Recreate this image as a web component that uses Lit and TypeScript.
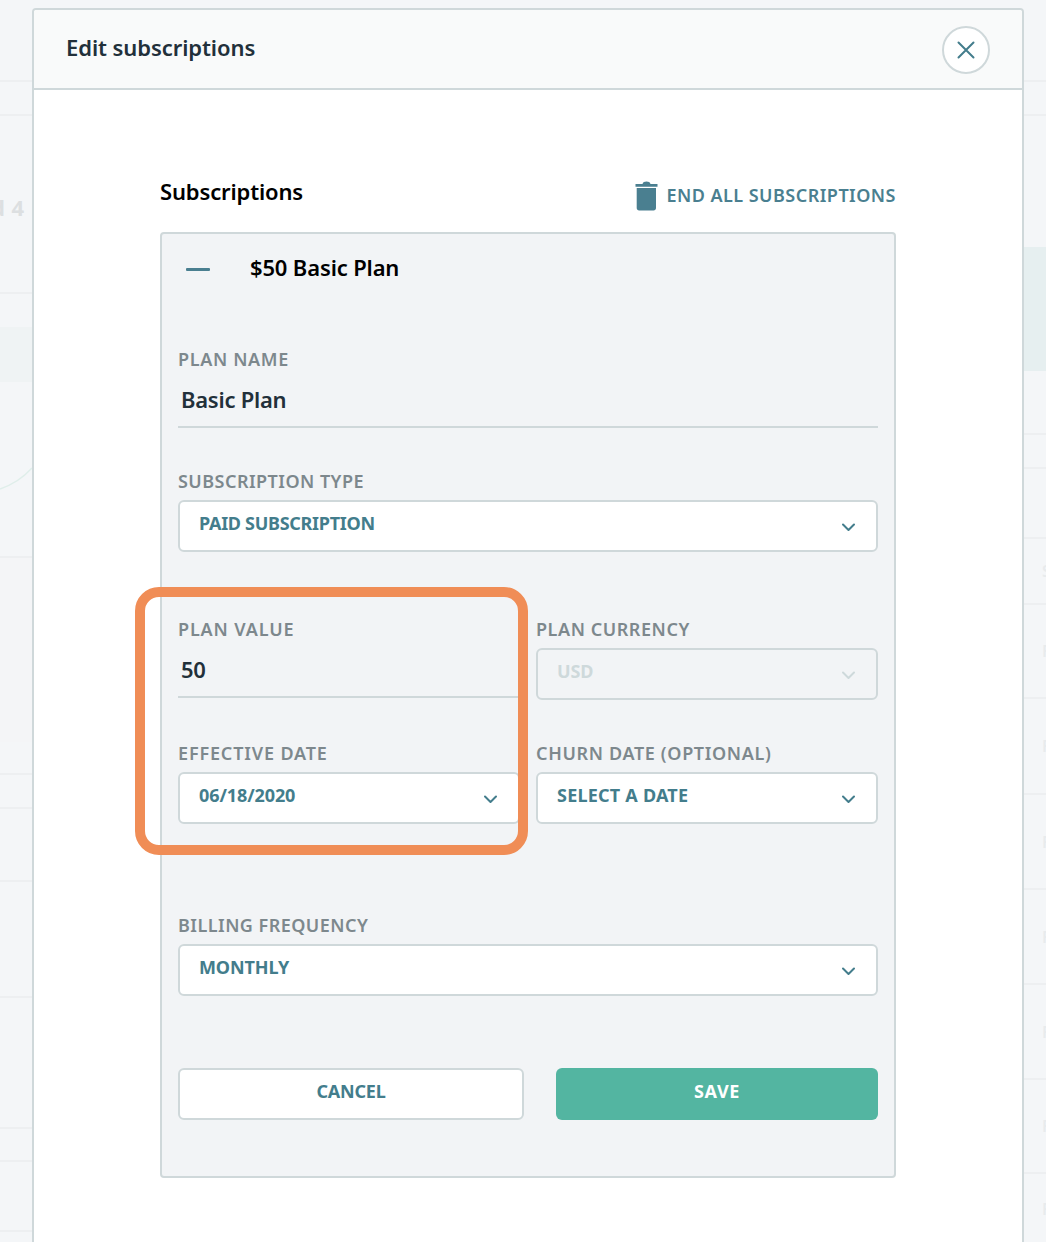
import { LitElement, html, css, svg } from "lit";
import { customElement } from "lit/decorators.js";

type Row = { h: number; line?: boolean; kind?: string; ghost?: string };

const leftRows: Row[] = [
  { h: 82, line: true },
  { h: 34, line: true },
  { h: 178, line: true, kind: "ghost-left", ghost: "d 4 r" },
  { h: 33 },
  { h: 55, kind: "hl-soft" },
  { h: 176, line: true, kind: "chart" },
  { h: 184, kind: "dim" },
  { h: 33, line: true },
  { h: 34, line: true },
  { h: 73, line: true },
  { h: 116, line: true },
  { h: 131, line: true },
  { h: 33, line: true },
  { h: 70, line: true },
  { h: 30 },
];

const rightRows: Row[] = [
  { h: 82, line: true },
  { h: 34, line: true },
  { h: 131 },
  { h: 124, kind: "hl" },
  { h: 64, line: true },
  { h: 34, line: true },
  { h: 70, line: true },
  { h: 66, line: true, kind: "ghost-right", ghost: "S" },
  { h: 94, line: true, kind: "ghost-right", ghost: "F" },
  { h: 96, line: true, kind: "ghost-right", ghost: "F" },
  { h: 95, line: true, kind: "ghost-right", ghost: "F" },
  { h: 95, line: true, kind: "ghost-right", ghost: "F" },
  { h: 95, line: true, kind: "ghost-right", ghost: "F" },
  { h: 94, line: true, kind: "ghost-right", ghost: "F" },
  { h: 69, kind: "ghost-right", ghost: "F" },
];

const chevron = svg`<path d="M1 1.5 L6.5 7 L12 1.5" fill="none" stroke="currentColor" stroke-width="2" stroke-linecap="round" stroke-linejoin="round"/>`;

@customElement("app-root")
export class AppRoot extends LitElement {
  static styles = css`
    :host {
      display: flex;
      width: 1046px;
      height: 1242px;
      overflow: hidden;
      background: #f4f6f8;
      font-family: "Noto Sans", "Open Sans", sans-serif;
    }
    .strip { flex: none; display: flex; flex-direction: column; overflow: hidden; }
    .strip.left { width: 32px; }
    .strip.right { width: 22px; }
    .row { flex: none; box-sizing: border-box; position: relative; overflow: hidden; }
    .row.line { border-bottom: 2px solid #edeff1; }
    .row.hl { background: #e6eff0; }
    .row.hl-soft { background: #eff3f4; }
    .row.dim { background: #f4f5f7; }
    .row.chart svg { position: absolute; left: 0; top: 0; }
    .row.ghost-left {
      display: flex; align-items: center; white-space: nowrap;
      padding-top: 6px;
      font-size: 22px; font-weight: 700; color: #dcdfe1; letter-spacing: 0.5px;
    }
    .row.ghost-left span { flex: none; margin-left: -9px; }
    .row.ghost-right {
      display: flex; align-items: center; padding-left: 18px;
      font-size: 16px; font-weight: 600; color: #e8ebed;
    }

    .modal {
      flex: none;
      box-sizing: border-box;
      width: 992px;
      height: 1300px;
      margin-top: 8px;
      background: #fff;
      border: 2px solid #cfd8da;
      border-radius: 4px 4px 0 0;
    }
    .modal-head {
      box-sizing: border-box;
      height: 80px;
      background: #f9fafa;
      border-bottom: 2px solid #cfd8da;
      border-radius: 3px 3px 0 0;
      display: flex;
      align-items: center;
      justify-content: space-between;
      padding: 0 32px;
    }
    .modal-title {
      font-size: 22px; font-weight: 600; line-height: 30px; color: #22303a;
      letter-spacing: -0.08px;
      margin-top: -4px;
    }
    .close {
      box-sizing: border-box;
      width: 48px; height: 48px;
      border: 2px solid #cfd8da;
      border-radius: 50%;
      background: #fff;
      display: flex; align-items: center; justify-content: center;
      color: #437d8c;
      margin-top: 2px;
    }
    .modal-body { padding: 0 126px; }
    .sub-head {
      box-sizing: border-box;
      height: 142px;
      padding-top: 85px;
      display: flex; justify-content: space-between; align-items: flex-start;
    }
    .sub-title {
      font-size: 22px; font-weight: 600; line-height: 32px; color: #000;
      letter-spacing: -0.15px;
    }
    .end-all {
      display: flex; align-items: flex-start; gap: 8px;
      margin-top: 6px;
      font-size: 18px; font-weight: 600; letter-spacing: 0.47px; line-height: 32px; color: #4a7f90;
    }
    .end-all span { margin-top: -2px; display: block; }
    .end-all svg { display: block; }
    .panel {
      box-sizing: border-box;
      height: 946px;
      background: #f2f4f6;
      border: 2px solid #cfd8da;
      border-radius: 4px;
      padding: 0 16px;
    }
    .plan-head {
      height: 66px;
      margin-bottom: 47px;
      display: flex; align-items: center; gap: 40px;
      padding-left: 8px;
    }
    .minus { width: 24px; height: 3px; background: #4a7f90; border-radius: 1px; margin-top: 4px; }
    .plan-title { font-size: 22px; font-weight: 560; letter-spacing: -0.15px; color: #000; }
    .label {
      height: 24px; line-height: 24px;
      font-size: 18px; font-weight: 600; letter-spacing: 0.55px;
      color: #7d888d;
      white-space: nowrap;
    }
    .label.snug { letter-spacing: 0.46px; }
    .label.loose { letter-spacing: 0.65px; }
    .label.looser { letter-spacing: 0.85px; }
    .input {
      box-sizing: border-box;
      border-bottom: 2px solid #cfd8da;
      font-size: 22px; font-weight: 560; letter-spacing: -0.25px; color: #22303a;
      padding-left: 3px;
      display: flex; align-items: center;
    }
    .input.tall { height: 57px; }
    .input.short { height: 57px; }
    .select {
      box-sizing: border-box;
      height: 52px;
      margin-top: 7px;
      background: #fff;
      border: 2px solid #cfd8da;
      border-radius: 6px;
      padding: 0 21px 0 19px;
      display: flex; align-items: center; justify-content: space-between;
      font-size: 18px; font-weight: 700; letter-spacing: -0.1px; color: #437d8c;
    }
    .select span { margin-top: -6px; }
    .select svg { display: block; margin-top: 2px; color: #437d8c; }
    .select.disabled { background: transparent; color: #ced9db; }
    .select.disabled svg { color: #ced9db; }
    .select.narrow { letter-spacing: -0.3px; }
    .select.wide { letter-spacing: 0.22px; }
    .g1 { margin-bottom: 41px; }
    .g2 { margin-bottom: 65px; }
    .pair {
      display: grid;
      grid-template-columns: 342px 342px;
      column-gap: 16px;
    }
    .pair .field.tall-f { height: 83px; }
    .pair.a { margin-bottom: 41px; }
    .pair.b { margin-bottom: 89px; }
    .g5 { margin-bottom: 72px; }
    .buttons { display: grid; grid-template-columns: 346px 322px; column-gap: 32px; }
    .btn {
      box-sizing: border-box;
      height: 52px;
      border-radius: 6px;
      display: flex; align-items: center; justify-content: center;
      font-size: 18px; font-weight: 700;
    }
    .btn span { margin-top: -6px; }
    .btn.cancel { background: #fff; border: 2px solid #cfd8da; color: #437d8c; letter-spacing: -0.2px; }
    .btn.save { background: #53b5a1; color: #fff; letter-spacing: 0.6px; }
    .highlight {
      position: absolute;
      box-sizing: border-box;
      left: 135px; top: 587px;
      width: 393px; height: 268px;
      border: 10px solid #f08d56;
      border-radius: 24px;
      pointer-events: none;
    }
  `;

  private strip(side: string, rows: Row[]) {
    return html`<div class="strip ${side}">
      ${rows.map(
        (r) => html`<div class="row ${r.line ? "line" : ""} ${r.kind ?? ""}" style="height:${r.h}px">
          ${r.kind === "chart"
            ? svg`<svg width="32" height="176" viewBox="0 0 32 176"><path d="M0 107 C12 103 23 96 32 86" fill="none" stroke="#dfeeea" stroke-width="1.5"/></svg>`
            : ""}
          ${r.ghost ? html`<span>${r.ghost}</span>` : ""}
        </div>`
      )}
    </div>`;
  }

  private select(value: string, opts: { disabled?: boolean; fit?: string } = {}) {
    return html`<div class="select ${opts.disabled ? "disabled" : ""} ${opts.fit ?? ""}">
      <span>${value}</span>
      <svg width="13" height="9" viewBox="0 0 13 9">${chevron}</svg>
    </div>`;
  }

  render() {
    return html`
      ${this.strip("left", leftRows)}
      <div class="modal">
        <div class="modal-head">
          <div class="modal-title">Edit subscriptions</div>
          <div class="close">
            <svg width="18" height="18" viewBox="0 0 18 18">
              <path d="M1.5 1.5 L16.5 16.5 M16.5 1.5 L1.5 16.5" stroke="currentColor" stroke-width="2" stroke-linecap="round" fill="none"/>
            </svg>
          </div>
        </div>
        <div class="modal-body">
          <div class="sub-head">
            <div class="sub-title">Subscriptions</div>
            <div class="end-all">
              <svg width="23" height="30" viewBox="0 0 23 30">
                <path fill="#4a7f90" d="M0.5 3 H7.5 C8 1.4 9.5 0.6 11.5 0.6 C13.5 0.6 15 1.4 15.5 3 H22.5 V5.8 H0.5 Z"/>
                <path fill="#4a7f90" d="M1.7 7 H21 V27 C21 28.4 20 29.4 18.6 29.4 H4.1 C2.7 29.4 1.7 28.4 1.7 27 Z"/>
              </svg>
              <span>END ALL SUBSCRIPTIONS</span>
            </div>
          </div>
          <div class="panel">
            <div class="plan-head">
              <div class="minus"></div>
              <div class="plan-title">$50 Basic Plan</div>
            </div>
            <div class="field g1">
              <div class="label loose">PLAN NAME</div>
              <div class="input tall">Basic Plan</div>
            </div>
            <div class="field g2">
              <div class="label snug">SUBSCRIPTION TYPE</div>
              ${this.select("PAID SUBSCRIPTION", { fit: "narrow" })}
            </div>
            <div class="pair a">
              <div class="field tall-f">
                <div class="label looser">PLAN VALUE</div>
                <div class="input short">50</div>
              </div>
              <div class="field">
                <div class="label">PLAN CURRENCY</div>
                ${this.select("USD", { disabled: true })}
              </div>
            </div>
            <div class="pair b">
              <div class="field">
                <div class="label looser">EFFECTIVE DATE</div>
                ${this.select("06/18/2020")}
              </div>
              <div class="field">
                <div class="label loose">CHURN DATE (OPTIONAL)</div>
                ${this.select("SELECT A DATE", { fit: "wide" })}
              </div>
            </div>
            <div class="field g5">
              <div class="label snug">BILLING FREQUENCY</div>
              ${this.select("MONTHLY")}
            </div>
            <div class="buttons">
              <div class="btn cancel"><span>CANCEL</span></div>
              <div class="btn save"><span>SAVE</span></div>
            </div>
          </div>
        </div>
      </div>
      ${this.strip("right", rightRows)}
      <div class="highlight"></div>
    `;
  }
}
